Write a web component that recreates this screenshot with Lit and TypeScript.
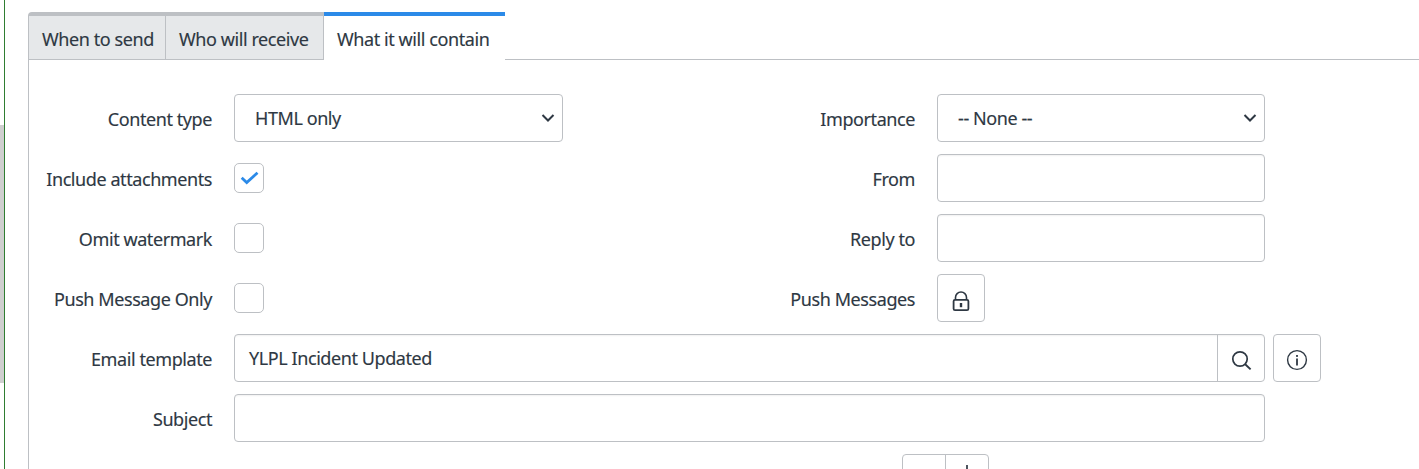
import { LitElement, html, css } from "lit";
import { customElement } from "lit/decorators.js";

const chevron = html`<svg class="chev" width="14" height="10" viewBox="0 0 14 10"><path d="M1.5 2 L7 7.5 L12.5 2" fill="none" stroke="#2e3843" stroke-width="2"/></svg>`;

@customElement("app-root")
export class AppRoot extends LitElement {
  static styles = css`
    :host { display: flex; height: 469px; width: 1419px; overflow: hidden; background: #fff;
      font-family: "Noto Sans", "Open Sans", sans-serif; font-size: 18px; color: #2e3843; letter-spacing: -0.42px; -webkit-text-stroke: 0.15px #2e3843; }
    * { box-sizing: border-box; }
    .strip { width: 4px; height: 258px; margin-top: 125px; background: #cfcfcf; flex: none; }
    .green { width: 1px; height: 469px; background: #2f7d32; flex: none; margin-right: 23px; }
    .main { width: 1391px; flex: none; padding-top: 12px; }
    .tabs { display: flex; height: 48px; }
    .tab { height: 48px; display: flex; align-items: center; background: #e6e8ea; border-top: 4px solid #bdc0c4;
      border-bottom: 1px solid #bdc0c4; border-right: 1px solid #bdc0c4; padding: 3px 13px 0; white-space: nowrap; }
    .tab.first { width: 138px; border-left: 1px solid #bdc0c4; border-top-left-radius: 4px; }
    .tab.second { width: 158px; }
    .tab.active { width: 181px; background: #fff; border-top-color: #2b8ae8; border-right: 0; border-bottom: 0; padding-top: 2px; }
    .rest { flex: 1; border-bottom: 1px solid #bdc0c4; }
    .panel { border-left: 1px solid #bdc0c4; padding-top: 34px; display: flex; flex-direction: column; gap: 12px; height: 409px; }
    .row { display: flex; height: 48px; flex: none; align-items: center; }
    .half { display: flex; width: 703px; align-items: center; height: 48px; flex: none; }
    .half.auto { width: auto; }
    .label { width: 183px; text-align: right; margin-right: 22px; flex: none; white-space: nowrap; padding-top: 2px; }
    .field { height: 48px; border: 1px solid #bdc0c4; border-radius: 4px; background: #fff;
      box-shadow: inset 0 2px 2px -1px rgba(0,0,0,0.06); display: flex; align-items: center; }
    .w329 { width: 329px; }
    .w328 { width: 328px; }
    .select { justify-content: space-between; padding: 0 7px 0 20px; box-shadow: none; }
    .wide { width: 1031px; padding-left: 14px; }
    .text { flex: 1; }
    .search { width: 47px; height: 46px; border-left: 1px solid #bdc0c4; display: flex; align-items: center; justify-content: center; flex: none; }
    .search svg { margin: 6px 0 0 2px; }
    .check { width: 30px; height: 30px; border: 1px solid #bdc0c4; border-radius: 5px; display: flex; align-items: center; justify-content: center; background: #fff; }
    .btn { width: 48px; height: 48px; border: 1px solid #bdc0c4; border-radius: 4px; display: flex; align-items: center; justify-content: center; background: #fff; flex: none; }
    .btn.lock svg { margin-top: 6px; }
    .info { margin-left: 8px; }
    .info svg { margin-top: 4px; }
    .pair { display: flex; margin-left: 873px; width: 87px; height: 48px; border: 1px solid #bdc0c4; border-radius: 4px; flex: none; }
    .pair div { flex: 1; display: flex; align-items: flex-start; justify-content: center; padding-top: 10px; }
    .pair div:first-child { border-right: 1px solid #bdc0c4; }
    svg { display: block; }
  `;

  render() {
    return html`
      <div class="strip"></div>
      <div class="green"></div>
      <div class="main">
        <div class="tabs">
          <div class="tab first">When to send</div>
          <div class="tab second">Who will receive</div>
          <div class="tab active">What it will contain</div>
          <div class="rest"></div>
        </div>
        <div class="panel">
          <div class="row">
            <div class="half"><div class="label">Content type</div><div class="field select w329"><span>HTML only</span>${chevron}</div></div>
            <div class="half"><div class="label">Importance</div><div class="field select w328"><span>-- None --</span>${chevron}</div></div>
          </div>
          <div class="row">
            <div class="half"><div class="label">Include attachments</div>
              <div class="check"><svg width="20" height="16" viewBox="0 0 20 16"><path d="M2.7 7.8 L7.7 12.5 L18.5 2.8" fill="none" stroke="#2b8ae8" stroke-width="2.8"/></svg></div></div>
            <div class="half"><div class="label">From</div><div class="field w328"></div></div>
          </div>
          <div class="row">
            <div class="half"><div class="label">Omit watermark</div><div class="check"></div></div>
            <div class="half"><div class="label">Reply to</div><div class="field w328"></div></div>
          </div>
          <div class="row">
            <div class="half"><div class="label">Push Message Only</div><div class="check"></div></div>
            <div class="half"><div class="label">Push Messages</div>
              <div class="btn lock"><svg width="20" height="22" viewBox="0 0 20 22"><path d="M4.5 10 V7.5 a5.5 5.5 0 0 1 11 0 V10" fill="none" stroke="#2e3843" stroke-width="1.6"/><rect x="2.6" y="9.9" width="14.8" height="10.2" rx="1.4" fill="none" stroke="#2e3843" stroke-width="1.8"/><rect x="8.8" y="13" width="2.4" height="4.2" fill="#2e3843"/></svg></div></div>
          </div>
          <div class="row">
            <div class="half auto"><div class="label">Email template</div>
              <div class="field wide"><span class="text">YLPL Incident Updated</span>
                <div class="search"><svg width="22" height="22" viewBox="0 0 22 22"><circle cx="9" cy="9" r="7.2" fill="none" stroke="#2e3843" stroke-width="1.7"/><path d="M14.2 14.2 L19.6 19.4" fill="none" stroke="#2e3843" stroke-width="1.9"/></svg></div></div>
              <div class="btn info"><svg width="22" height="22" viewBox="0 0 22 22"><circle cx="11" cy="11" r="9.4" fill="none" stroke="#2e3843" stroke-width="1.4"/><rect x="10.1" y="9.5" width="1.8" height="7" fill="#2e3843"/><rect x="10.1" y="6" width="1.8" height="1.9" fill="#2e3843"/></svg></div></div>
          </div>
          <div class="row">
            <div class="half auto"><div class="label">Subject</div><div class="field wide"></div></div>
          </div>
          <div class="pair"><div></div><div><svg width="14" height="14" viewBox="0 0 14 14"><path d="M7 0 V14 M0 7 H14" fill="none" stroke="#2e3843" stroke-width="1.7"/></svg></div></div>
        </div>
      </div>
    `;
  }
}
